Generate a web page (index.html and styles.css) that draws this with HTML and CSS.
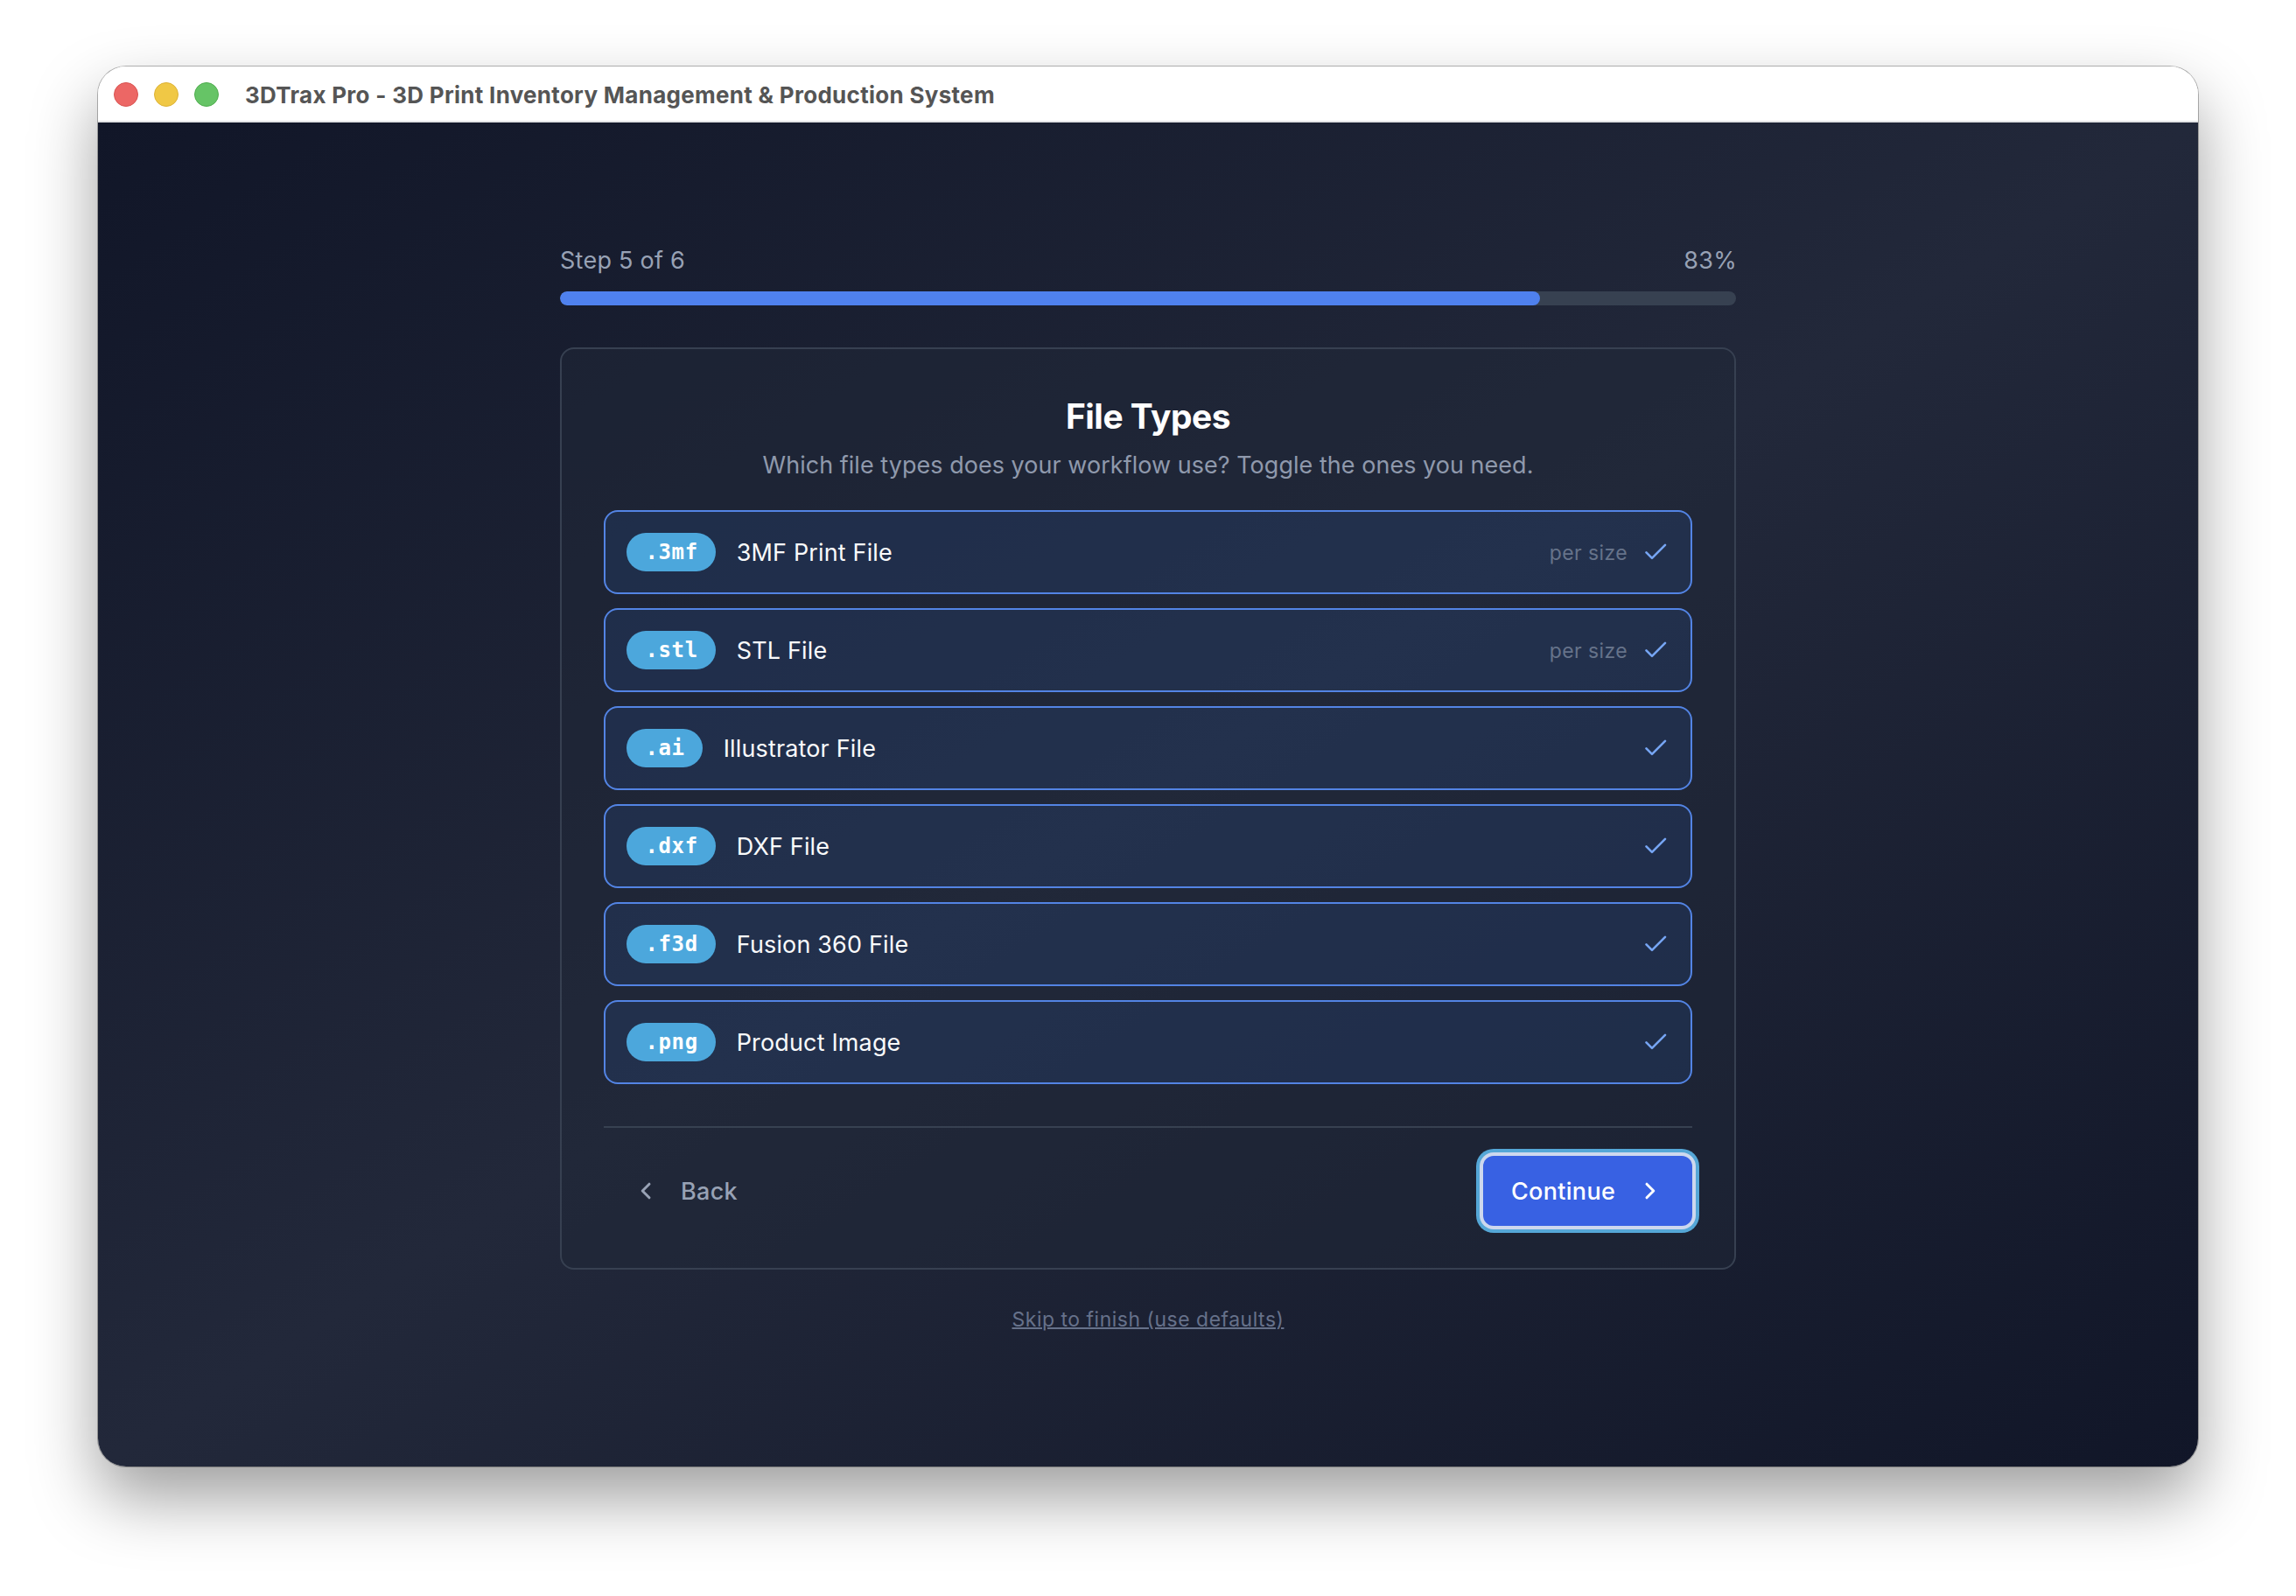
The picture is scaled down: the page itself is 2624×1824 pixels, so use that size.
FILE: index.html
```html
<!DOCTYPE html>
<html lang="en">
<head>
    <meta charset="UTF-8">
    <meta name="viewport" content="width=device-width, initial-scale=1.0">
    <title>3DTrax Pro</title>
    <link rel="stylesheet" href="styles.css">
</head>
<body>
    <div class="window">
        <div class="titlebar">
            <span class="light red"></span>
            <span class="light yellow"></span>
            <span class="light green"></span>
            <span class="window-title">3DTrax Pro - 3D Print Inventory Management &amp; Production System</span>
        </div>

        <main class="wizard">
            <div class="progress-labels">
                <span>Step 5 of 6</span>
                <span class="percent">83%</span>
            </div>
            <div class="progress">
                <div class="progress-fill" style="width: 83.333%"></div>
            </div>

            <section class="card">
                <h1>File Types</h1>
                <p class="subtitle">Which file types does your workflow use? Toggle the ones you need.</p>

                <div class="file-list">
                    <div class="file-row">
                        <span class="badge">.3mf</span>
                        <span class="name">3MF Print File</span>
                        <span class="note">per size</span>
                        <svg class="check" viewBox="0 0 28 28"><path d="M1.5 14.3 8 20.8 23 5.8"/></svg>
                    </div>
                    <div class="file-row">
                        <span class="badge">.stl</span>
                        <span class="name">STL File</span>
                        <span class="note">per size</span>
                        <svg class="check" viewBox="0 0 28 28"><path d="M1.5 14.3 8 20.8 23 5.8"/></svg>
                    </div>
                    <div class="file-row">
                        <span class="badge">.ai</span>
                        <span class="name">Illustrator File</span>
                        <svg class="check" viewBox="0 0 28 28"><path d="M1.5 14.3 8 20.8 23 5.8"/></svg>
                    </div>
                    <div class="file-row">
                        <span class="badge">.dxf</span>
                        <span class="name">DXF File</span>
                        <svg class="check" viewBox="0 0 28 28"><path d="M1.5 14.3 8 20.8 23 5.8"/></svg>
                    </div>
                    <div class="file-row">
                        <span class="badge">.f3d</span>
                        <span class="name">Fusion 360 File</span>
                        <svg class="check" viewBox="0 0 28 28"><path d="M1.5 14.3 8 20.8 23 5.8"/></svg>
                    </div>
                    <div class="file-row">
                        <span class="badge">.png</span>
                        <span class="name">Product Image</span>
                        <svg class="check" viewBox="0 0 28 28"><path d="M1.5 14.3 8 20.8 23 5.8"/></svg>
                    </div>
                </div>

                <div class="actions">
                    <button class="back-button">
                        <svg class="chevron" viewBox="0 0 32 32"><path d="M20 8.2 12.2 16 20 23.8"/></svg>
                        Back
                    </button>
                    <button class="continue-button">
                        Continue
                        <svg class="chevron" viewBox="0 0 32 32"><path d="M12 8.2 19.8 16 12 23.8"/></svg>
                    </button>
                </div>
            </section>

            <a class="skip">Skip to finish (use defaults)</a>
        </main>
    </div>
</body>
</html>
```
FILE: styles.css
```css
* {
    box-sizing: border-box;
}

body {
    margin: 0;
    padding: 76px 112px 0;
    height: 1824px;
    overflow: hidden;
    background: #fff;
    font-family: Inter, sans-serif;
    font-size: 27px;
}

.window {
    width: 2400px;
    height: 1600px;
    border-radius: 32px;
    overflow: hidden;
    display: flex;
    flex-direction: column;
    box-shadow: 0 0 0 1px rgba(0, 0, 0, 0.28), 0 36px 76px rgba(0, 0, 0, 0.38);
}

.titlebar {
    height: 64px;
    flex: none;
    display: flex;
    align-items: center;
    gap: 18px;
    padding-left: 18px;
    padding-top: 1px;
    background: #fff;
    border-bottom: 2px solid #e3e4e6;
}

.light {
    width: 28px;
    height: 28px;
    border-radius: 50%;
    border: 1px solid;
}

.red {
    background: #ec6765;
    border-color: #d85452;
}

.yellow {
    background: #f0c845;
    border-color: #dcb237;
}

.green {
    background: #66c466;
    border-color: #50ad4f;
}

.window-title {
    margin-left: 12px;
    padding-top: 1px;
    font-size: 26px;
    font-weight: 700;
    letter-spacing: 0.29px;
    color: #555;
    white-space: nowrap;
}

.wizard {
    flex: 1;
    display: flex;
    flex-direction: column;
    padding: 137px 528px 0;
    background: linear-gradient(to bottom right, #111628, #22283a 50%, #111628);
}

.progress-labels {
    display: flex;
    justify-content: space-between;
    height: 41px;
    line-height: 41px;
    color: #98a2b5;
    letter-spacing: 0.25px;
}

.percent {
    margin-right: -1px;
}

.progress {
    height: 16px;
    margin-top: 15px;
    border-radius: 8px;
    background: #374151;
    overflow: hidden;
}

.progress-fill {
    height: 100%;
    border-radius: 8px;
    background: #4f81ee;
}

/* Wizard card */
.card {
    margin-top: 48px;
    height: 1054px;
    padding: 48px;
    border: 2px solid #374051;
    border-radius: 16px;
    background: rgba(32, 40, 56, 0.5);
    display: flex;
    flex-direction: column;
}

h1 {
    margin: 0;
    height: 58px;
    line-height: 58px;
    text-align: center;
    font-size: 39px;
    font-weight: 700;
    letter-spacing: -0.5px;
    color: #fff;
}

.subtitle {
    margin: 7px 0 0;
    height: 40px;
    line-height: 40px;
    text-align: center;
    letter-spacing: 0.03px;
    color: #8f99ac;
}

.file-list {
    margin-top: 31px;
    display: flex;
    flex-direction: column;
    gap: 16px;
}

.file-row {
    height: 96px;
    display: flex;
    align-items: center;
    padding: 0 24px;
    border: 2px solid #5384e4;
    border-radius: 16px;
    background: rgba(59, 130, 246, 0.11);
}

.badge {
    height: 44px;
    line-height: 45px;
    padding: 0 20px 0 21.5px;
    border-radius: 22px;
    background: #4ca7dc;
    color: #fff;
    font-family: "DejaVu Sans Mono", monospace;
    font-size: 24px;
    font-weight: 700;
    letter-spacing: 0.6px;
}

.name {
    flex: 1;
    margin-left: 24px;
    color: #f9fafb;
    letter-spacing: 0.15px;
}

.note {
    margin-right: 20px;
    padding-top: 2px;
    font-size: 23px;
    letter-spacing: 0.4px;
    color: #66738a;
}

.check {
    width: 28px;
    height: 28px;
    fill: none;
    stroke: #76a5f3;
    stroke-width: 2.6;
    stroke-linecap: round;
    stroke-linejoin: round;
}

.actions {
    margin-top: 48px;
    padding-top: 32px;
    border-top: 2px solid #374151;
    display: flex;
    justify-content: space-between;
}

button {
    height: 80px;
    display: flex;
    align-items: center;
    border: none;
    border-radius: 12px;
    font-family: inherit;
    font-size: 27px;
    font-weight: 500;
    letter-spacing: 0.3px;
}

.back-button {
    padding: 0 32px;
    gap: 24px;
    background: none;
    color: #98a2b5;
}

.continue-button {
    width: 239px;
    padding: 0 32px;
    justify-content: space-between;
    background: #3861e3;
    color: #fff;
    /* focus ring */
    box-shadow: 0 0 0 4px #cdd8ee, 0 0 0 8px #55a7d7;
}

.chevron {
    width: 32px;
    height: 32px;
    fill: none;
    stroke: currentColor;
    stroke-width: 3;
    stroke-linecap: round;
    stroke-linejoin: round;
}

.skip {
    margin-top: 40px;
    line-height: 34px;
    text-align: center;
    font-size: 23px;
    color: #66718a;
    text-decoration: underline;
    text-decoration-thickness: 2px;
    letter-spacing: 0.5px;
}
```
